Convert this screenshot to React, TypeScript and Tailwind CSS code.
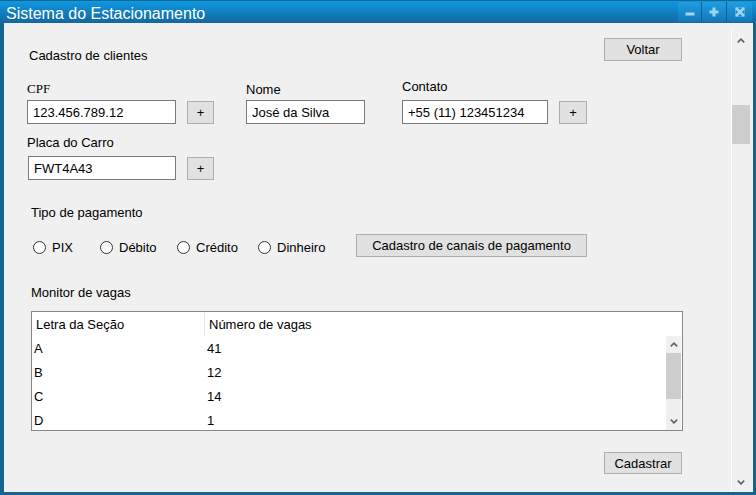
import React from 'react';

const sans = "font-['Liberation_Sans',Arial,sans-serif]";

// botão padrão estilo WinForms
const WinButton = ({ label, className = '' }: { label: string; className?: string }) => (
  <button
    className={`bg-[#e1e1e1] border border-[#adadad] text-black text-[13px] leading-[15px] flex items-center justify-center ${className}`}
  >
    {label}
  </button>
);

const TextBox = ({ value, className = '' }: { value: string; className?: string }) => (
  <div
    className={`bg-white border border-[#7a7a7a] h-[24px] flex items-center pl-[5px] text-[13px] leading-[15px] ${className}`}
  >
    {value}
  </div>
);

const Chevron = ({ up }: { up?: boolean }) => (
  <svg width="8" height="5" viewBox="0 0 8 5" className="block">
    <polyline
      points={up ? '0.8,4.4 4,1.2 7.2,4.4' : '0.8,0.6 4,3.8 7.2,0.6'}
      fill="none"
      stroke="#606060"
      strokeWidth="1.6"
    />
  </svg>
);

const Radio = ({ label, className = '' }: { label: string; className?: string }) => (
  <div className={`flex items-center h-[15px] ${className}`}>
    <div className="w-[13px] h-[13px] rounded-full border border-[#333333] bg-white shrink-0" />
    <span className="ml-[6px]">{label}</span>
  </div>
);

const TitleBar = () => (
  <div className="h-[23px] flex items-start bg-gradient-to-b from-[#0a99e3] to-[#14679e] border-t border-[#1b6290] overflow-hidden">
    <span className="pl-[6px] pt-[3px] text-[16px] leading-[19px] text-white">Sistema do Estacionamento</span>
    <div className="ml-auto mr-[4px] mt-[1px] flex h-[20px] gap-[1px] bg-[#0f5d92]">
      <div className="w-[23px] h-full bg-gradient-to-b from-[#1d9fe4] to-[#1577b6] flex items-center justify-center">
        <svg width="10" height="10" viewBox="0 0 10 10">
          <rect x="0.5" y="5.5" width="9" height="3" fill="#9ed5f3" />
        </svg>
      </div>
      <div className="w-[24px] h-full bg-gradient-to-b from-[#1d9fe4] to-[#1577b6] flex items-center justify-center">
        <svg width="10" height="10" viewBox="0 0 10 10">
          <rect x="0.5" y="3.5" width="9" height="3" fill="#9ed5f3" />
          <rect x="3.5" y="0.5" width="3" height="9" fill="#9ed5f3" />
        </svg>
      </div>
      <div className="w-[25px] h-full bg-gradient-to-b from-[#1d9fe4] to-[#1577b6] flex items-center justify-center">
        <svg width="10" height="10" viewBox="0 0 10 10">
          <path d="M1 1 L9 9 M9 1 L1 9" stroke="#9ed5f3" strokeWidth="2.6" fill="none" />
          <rect x="0.5" y="0.5" width="9" height="9" fill="none" stroke="#9ed5f3" strokeOpacity="0.35" />
        </svg>
      </div>
    </div>
  </div>
);

const vagas = [
  { secao: 'A', num: '41' },
  { secao: 'B', num: '12' },
  { secao: 'C', num: '14' },
  { secao: 'D', num: '1' },
];

export default function App() {
  return (
    <div className={`w-[756px] h-[495px] bg-[#176390] flex flex-col overflow-hidden text-[13px] leading-[15px] text-black ${sans}`}>
      <TitleBar />
      <div className="flex-1 flex pl-[4px] pr-[3px] pb-[3px] min-h-0">
        <main className="flex-1 bg-[#f0f0f0] flex flex-col pt-[15px]">
          {/* Cabeçalho */}
          <div className="flex items-start h-[25px]">
            <span className="ml-[25px] mt-[10px]">Cadastro de clientes</span>
            <WinButton label="Voltar" className="ml-auto mr-[49px] w-[78px] h-[23px]" />
          </div>

          {/* CPF / Nome / Contato */}
          <div className="flex items-start mt-[16px]">
            <div className="ml-[23px] flex flex-col">
              <div className="h-[21px] pt-[2px] font-['Liberation_Serif','Times_New_Roman',serif] text-[13px]">CPF</div>
              <div className="flex items-start">
                <TextBox value="123.456.789.12" className="w-[149px]" />
                <WinButton label="+" className="ml-[11px] mt-[1px] w-[27px] h-[23px]" />
              </div>
            </div>
            <div className="ml-[32px] flex flex-col">
              <div className="h-[21px] pt-[3px]">Nome</div>
              <TextBox value="José da Silva" className="w-[119px]" />
            </div>
            <div className="ml-[37px] flex flex-col">
              <div className="h-[21px]">Contato</div>
              <div className="flex items-start">
                <TextBox value="+55 (11) 123451234" className="w-[146px]" />
                <WinButton label="+" className="ml-[11px] mt-[1px] w-[28px] h-[23px]" />
              </div>
            </div>
          </div>

          {/* Placa */}
          <div className="ml-[23px] mt-[11px] flex flex-col">
            <div className="h-[21px]">Placa do Carro</div>
            <div className="flex items-start">
              <TextBox value="FWT4A43" className="ml-[1px] w-[148px]" />
              <WinButton label="+" className="ml-[11px] mt-[1px] w-[27px] h-[23px]" />
            </div>
          </div>

          {/* Pagamento */}
          <div className="ml-[27px] mt-[25px] h-[15px]">Tipo de pagamento</div>
          <div className="flex items-start mt-[14px] h-[23px] ml-[29px]">
            <Radio label="PIX" className="w-[67px] mt-[6px]" />
            <Radio label="Débito" className="w-[77px] mt-[6px]" />
            <Radio label="Crédito" className="w-[81px] mt-[6px]" />
            <Radio label="Dinheiro" className="w-[98px] mt-[6px]" />
            <WinButton label="Cadastro de canais de pagamento" className="w-[231px] h-[23px]" />
          </div>

          {/* Monitor */}
          <div className="ml-[27px] mt-[28px] h-[15px]">Monitor de vagas</div>
          <div className="ml-[27px] mt-[11px] w-[652px] h-[120px] border border-[#828790] bg-white flex flex-col overflow-hidden">
            <div className="h-[24px] flex items-stretch shrink-0">
              <div className="w-[172px] pl-[4px] flex items-center">Letra da Seção</div>
              <div className="w-[1px] bg-[#e5e5e5]" />
              <div className="pl-[4px] flex items-center">Número de vagas</div>
            </div>
            <div className="flex-1 flex min-h-0">
              <div className="flex-1 overflow-hidden">
                {vagas.map(v => (
                  <div key={v.secao} className="h-[24px] flex items-center">
                    <div className="w-[174px] pl-[2px]">{v.secao}</div>
                    <div className="pl-[1px]">{v.num}</div>
                  </div>
                ))}
              </div>
              <div className="w-[15px] mr-[1px] bg-[#f0f0f0] flex flex-col">
                <div className="h-[17px] flex items-center justify-center">
                  <Chevron up />
                </div>
                <div className="h-[46px] bg-[#cdcdcd]" />
                <div className="flex-1" />
                <div className="h-[17px] flex items-center justify-center">
                  <Chevron />
                </div>
              </div>
            </div>
          </div>

          <WinButton label="Cadastrar" className="mt-[21px] ml-auto mr-[49px] w-[78px] h-[22px]" />
        </main>

        {/* Barra de rolagem da janela */}
        <div className="w-[22px] bg-[#f0f0f0] flex">
          <div className="w-[1px] bg-white mt-[7px]" />
          <div className="flex-1 flex flex-col">
            <div className="w-[18px] flex justify-center mt-[15px]">
              <Chevron up />
            </div>
            <div className="w-[18px] h-[39px] bg-[#cdcdcd] mt-[62px]" />
            <div className="flex-1" />
            <div className="w-[18px] flex justify-center mb-[7px]">
              <Chevron />
            </div>
          </div>
        </div>
      </div>
    </div>
  );
}
